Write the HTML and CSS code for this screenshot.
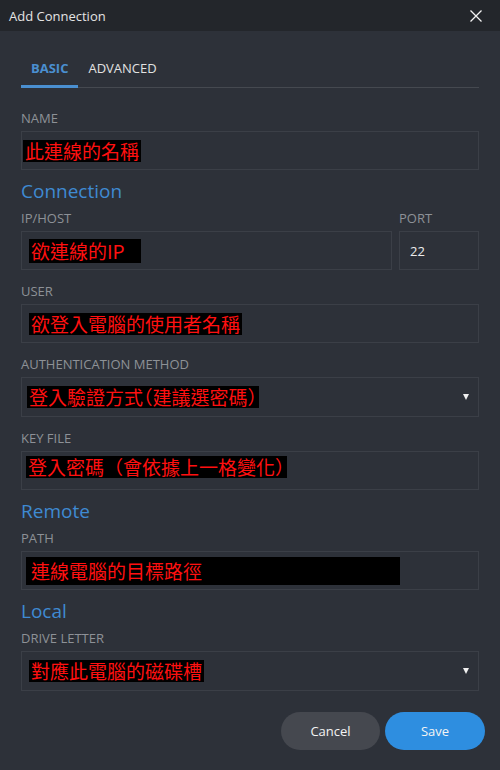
FILE: index.html
```html
<!DOCTYPE html>
<html>
<head>
<meta charset="utf-8">
<link rel="stylesheet" href="styles.css">
</head>
<body>
<div class="dialog">
  <div class="titlebar">
    <span class="title">Add Connection</span>
    <svg class="close" width="14" height="14" viewBox="0 0 14 14"><path d="M1.5 1.5 L12.5 12.5 M12.5 1.5 L1.5 12.5" stroke="#f2f2f2" stroke-width="1.3" fill="none"/></svg>
  </div>
  <div class="content">
    <div class="tabs">
      <div class="tab active">BASIC</div>
      <div class="tab">ADVANCED</div>
    </div>

    <div class="field first">
      <div class="label">NAME</div>
      <div class="box box-name"><span class="note">此連線的名稱</span></div>
    </div>

    <div class="section">Connection</div>
    <div class="row">
      <div class="field tight grow">
        <div class="label">IP/HOST</div>
        <div class="box"><span class="note note-ip">欲連線的IP</span></div>
      </div>
      <div class="field tight port">
        <div class="label">PORT</div>
        <div class="box value">22</div>
      </div>
    </div>

    <div class="field">
      <div class="label">USER</div>
      <div class="box"><span class="note">欲登入電腦的使用者名稱</span></div>
    </div>

    <div class="field">
      <div class="label">AUTHENTICATION METHOD</div>
      <div class="box select"><span class="note note-auth">登入驗證方式（建議選密碼）</span><span class="caret"></span></div>
    </div>

    <div class="field">
      <div class="label">KEY FILE</div>
      <div class="box"><span class="note note-key">登入密碼（會依據上一格變化<span class="half">）</span></span></div>
    </div>

    <div class="section">Remote</div>
    <div class="field tight">
      <div class="label">PATH</div>
      <div class="box"><span class="note note-path">連線電腦的目標路徑</span></div>
    </div>

    <div class="section">Local</div>
    <div class="field tight">
      <div class="label">DRIVE LETTER</div>
      <div class="box select"><span class="note">對應此電腦的磁碟槽</span><span class="caret"></span></div>
    </div>

    <div class="actions">
      <button class="btn cancel">Cancel</button>
      <button class="btn save">Save</button>
    </div>
  </div>
</div>
</body>
</html>
```

FILE: styles.css
```css
html, body {
  margin: 0;
  padding: 0;
  background: #2d3139;
}

body {
  font-family: "Open Sans", "Noto Sans", sans-serif;
  width: 500px;
  height: 770px;
  overflow: hidden;
}

.dialog {
  width: 500px;
  height: 770px;
  background: #2d3139;
}

.titlebar {
  height: 31px;
  background: #23262b;
  display: flex;
  align-items: center;
  justify-content: space-between;
  padding: 0 17px 0 9px;
  box-sizing: border-box;
}

.title {
  color: #e4e4e4;
  font-size: 13px;
}

.close {
  display: block;
}

.content {
  padding: 0 21px;
}

.tabs {
  display: flex;
  margin-top: 24px;
  border-bottom: 1px solid #454950;
  height: 33px;
  box-sizing: border-box;
}

.tab {
  padding: 0 10px;
  font-size: 13px;
  font-weight: 400;
  color: #e2e2e2;
  line-height: 26px;
}

.tab.active {
  color: #4a8fd0;
  font-weight: 700;
  border-bottom: 3px solid #4a8fd0;
  margin-bottom: -1px;
}

.field {
  margin-top: 13px;
}

.field.first {
  margin-top: 22px;
}

.field.tight {
  margin-top: 7px;
}

.label {
  font-size: 13px;
  line-height: 16px;
  color: #8d9197;
  margin-bottom: 5px;
}

.box {
  height: 39px;
  box-sizing: border-box;
  border: 1px solid #3b3f47;
  display: flex;
  align-items: center;
  padding-left: 7px;
  padding-right: 9px;
}

.box-name {
  padding-left: 1px;
}

.value {
  color: #ececec;
  font-size: 13px;
  padding-left: 10px;
}

.row {
  display: flex;
  gap: 7px;
}

.grow {
  flex: 1;
}

.port {
  width: 80px;
}

.select {
  height: 40px;
  justify-content: space-between;
}

.caret {
  width: 0;
  height: 0;
  border-left: 3.5px solid transparent;
  border-right: 3.5px solid transparent;
  border-top: 6px solid #f0f0f0;
}

.note {
  font-family: "Noto Sans CJK TC", "Noto Sans CJK SC", sans-serif;
  font-size: 19px;
  line-height: 22px;
  color: #ff1010;
  background: #000;
  padding: 0 2px;
  white-space: nowrap;
}

.note-ip {
  line-height: 24px;
  padding-right: 16px;
}

.note-auth {
  font-feature-settings: "halt" 1;
  margin-left: -2px;
}

.note-key {
  margin-top: -8px;
  margin-left: -3px;
}

.half {
  font-feature-settings: "halt" 1;
}

.note-path {
  display: inline-block;
  width: 367px;
  line-height: 28px;
  padding-left: 5px;
  margin-left: -3px;
}

.section {
  color: #3f8ad2;
  font-size: 19px;
  line-height: 24px;
  margin-top: 9px;
}

.actions {
  display: flex;
  justify-content: flex-end;
  gap: 5px;
  margin-top: 21px;
  margin-right: -6px;
}

.btn {
  border: none;
  height: 38px;
  border-radius: 19px;
  font-family: "Open Sans", "Noto Sans", sans-serif;
  font-size: 13px;
  color: #f4f4f4;
  width: 100px;
  padding: 0;
}

.cancel {
  background: #45484f;
  width: 99px;
}

.save {
  background: #2e8ee0;
}
```
